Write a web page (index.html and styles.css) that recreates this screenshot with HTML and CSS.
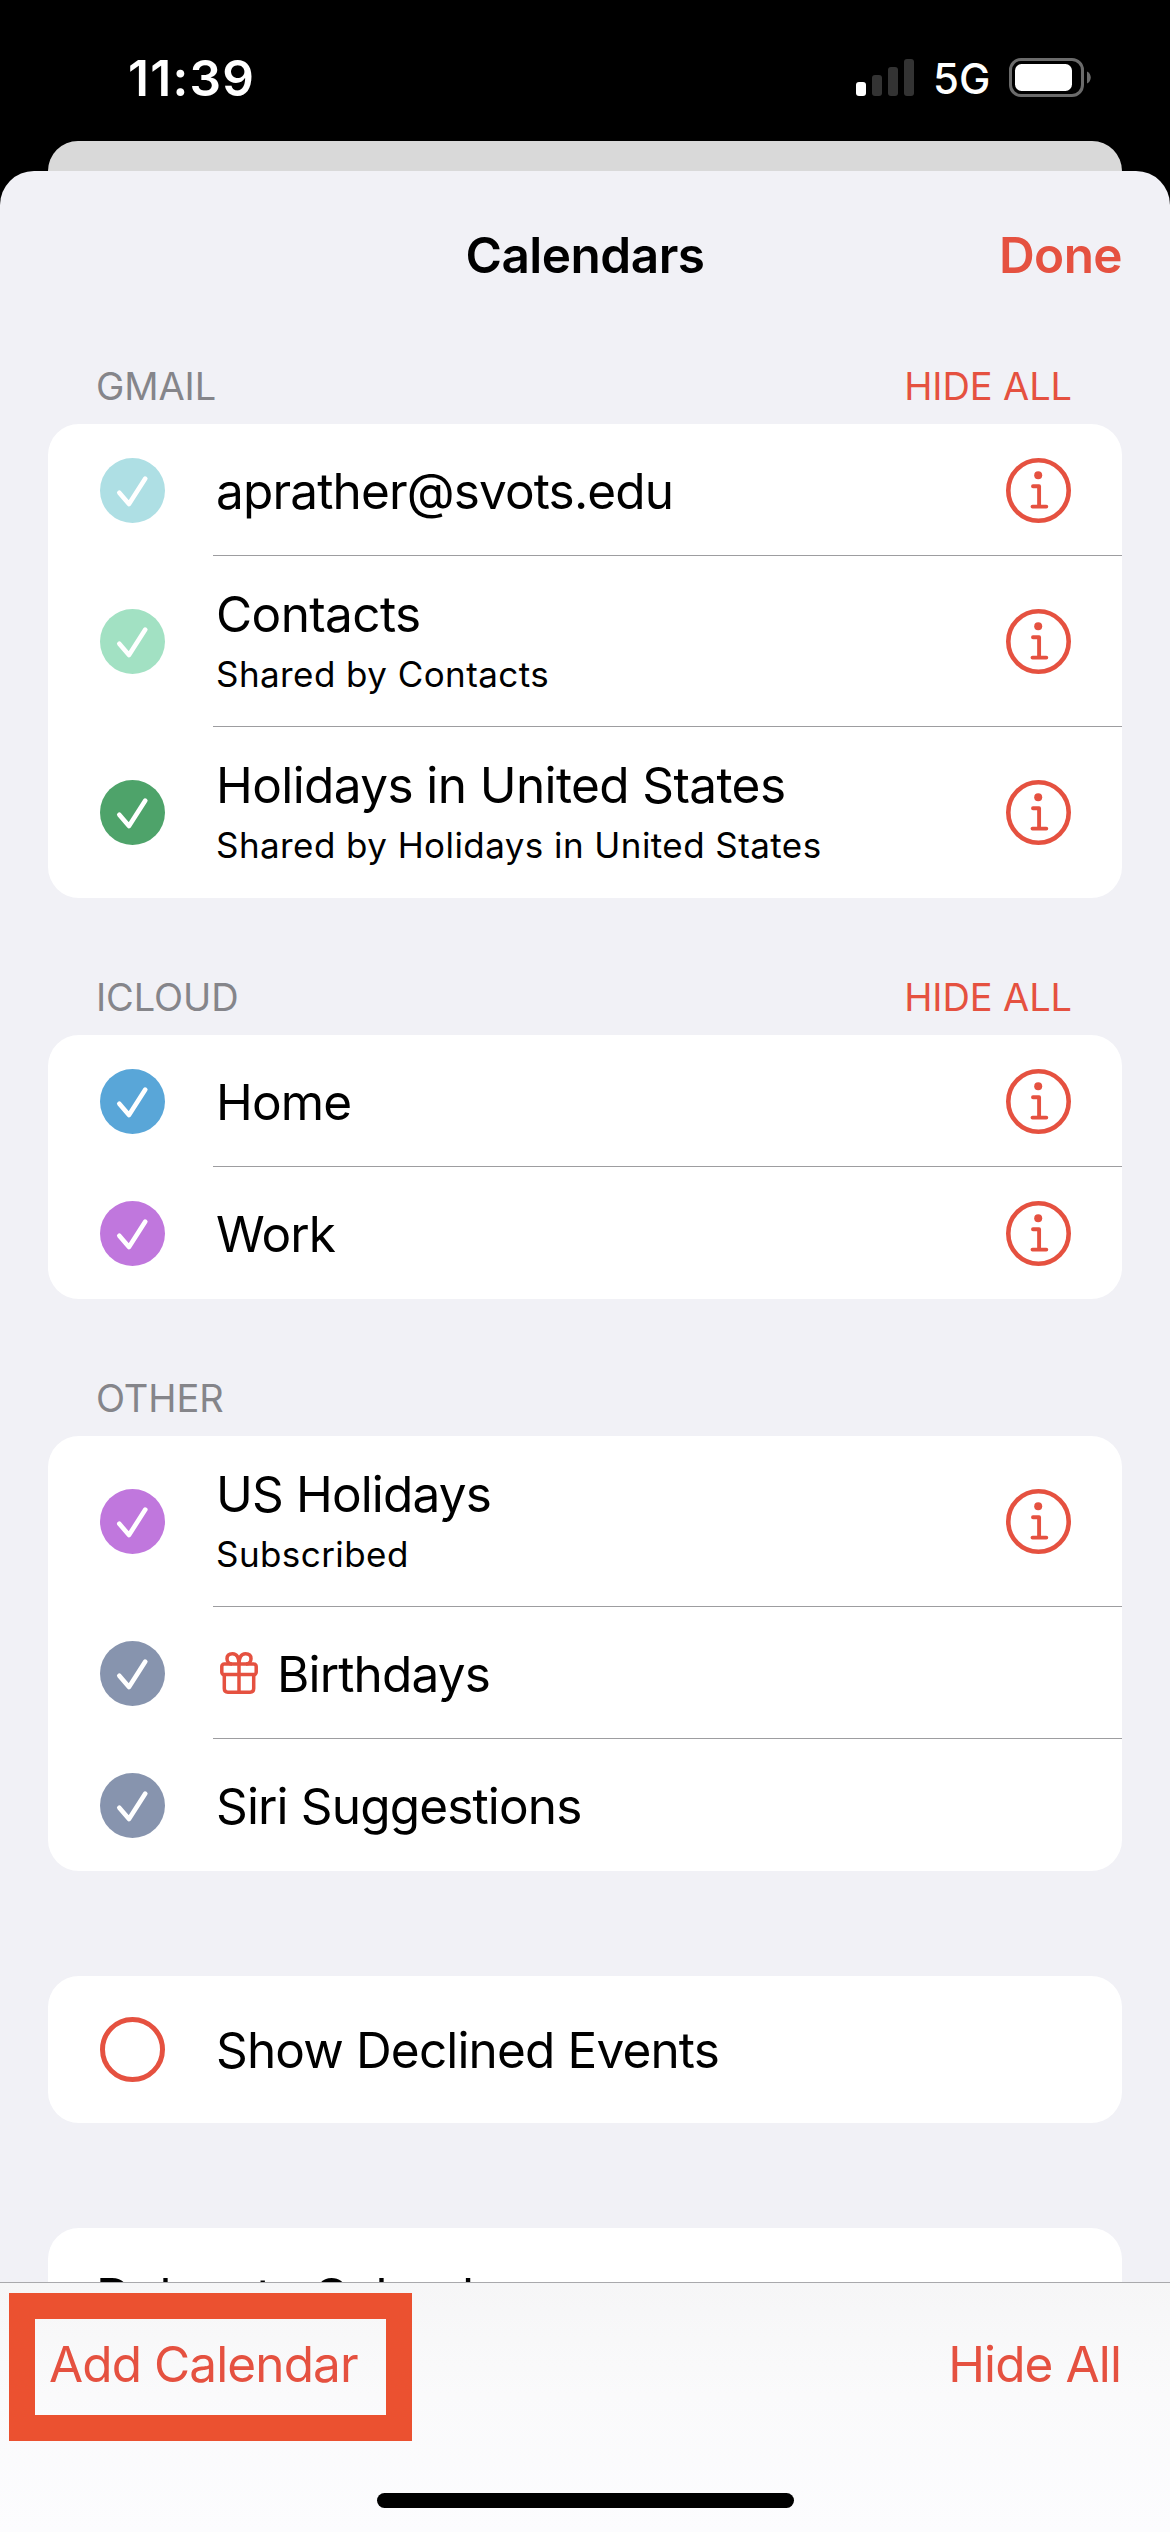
FILE: index.html
```html
<!DOCTYPE html>
<html lang="en">
<head>
<meta charset="utf-8">
<title>Calendars</title>
<link rel="stylesheet" href="styles.css">
</head>
<body>
<svg class="defs" width="0" height="0">
  <symbol id="check" viewBox="0 0 65 65">
    <circle cx="32.5" cy="32.5" r="32.5" fill="currentColor"/>
    <path d="M19.3 34.8 29 46 45.3 20.6" fill="none" stroke="#fff" stroke-width="4.6" stroke-linecap="round" stroke-linejoin="round"/>
  </symbol>
  <symbol id="info" viewBox="0 0 65 65">
    <circle cx="32.5" cy="32.5" r="30.2" fill="none" stroke="currentColor" stroke-width="4.6"/>
    <circle cx="32.2" cy="17.3" r="4" fill="currentColor"/>
    <path d="M27 28.2h6.1v20.4M26.5 48.6h13.8" fill="none" stroke="currentColor" stroke-width="3.9" stroke-linecap="round" stroke-linejoin="round"/>
  </symbol>
</svg>
<div class="screen">
  <header class="status">
    <span class="time">11:39</span>
    <div class="indicators">
      <svg class="signal" width="58" height="37" viewBox="0 0 58 37">
        <rect x="0" y="23" width="10" height="14" rx="3" fill="#fff"/>
        <rect x="16" y="16" width="10" height="21" rx="3" fill="#333"/>
        <rect x="32" y="8" width="10" height="29" rx="3" fill="#333"/>
        <rect x="48" y="0" width="10" height="37" rx="3" fill="#333"/>
      </svg>
      <span class="network">5G</span>
      <svg class="battery" width="82" height="39" viewBox="0 0 82 39">
        <rect x="1.5" y="1.5" width="72" height="36" rx="10.5" fill="none" stroke="#6b6b6b" stroke-width="3"/>
        <rect x="6" y="6" width="57" height="27" rx="6.5" fill="#fff"/>
        <path d="M78 13.5c5 2 5 10 0 12z" fill="#6b6b6b"/>
      </svg>
    </div>
  </header>
  <div class="back-sheet"></div>
  <main class="sheet">
    <nav class="nav">
      <h1 class="title">Calendars</h1>
      <a class="done">Done</a>
    </nav>

    <div class="section-head"><span>GMAIL</span><a>HIDE ALL</a></div>
    <section class="card">
      <div class="row">
        <svg class="badge sky"><use href="#check"/></svg>
        <div class="label"><span class="name">aprather@svots.edu</span></div>
        <svg class="info"><use href="#info"/></svg>
      </div>
      <div class="row tall">
        <svg class="badge mint"><use href="#check"/></svg>
        <div class="label"><span class="name loose">Contacts</span><span class="sub">Shared by Contacts</span></div>
        <svg class="info"><use href="#info"/></svg>
      </div>
      <div class="row tall">
        <svg class="badge green"><use href="#check"/></svg>
        <div class="label"><span class="name loose">Holidays in United States</span><span class="sub">Shared by Holidays in United States</span></div>
        <svg class="info"><use href="#info"/></svg>
      </div>
    </section>

    <div class="section-head"><span>ICLOUD</span><a>HIDE ALL</a></div>
    <section class="card">
      <div class="row">
        <svg class="badge blue"><use href="#check"/></svg>
        <div class="label"><span class="name">Home</span></div>
        <svg class="info"><use href="#info"/></svg>
      </div>
      <div class="row">
        <svg class="badge purple"><use href="#check"/></svg>
        <div class="label"><span class="name">Work</span></div>
        <svg class="info"><use href="#info"/></svg>
      </div>
    </section>

    <div class="section-head"><span>OTHER</span></div>
    <section class="card">
      <div class="row tall">
        <svg class="badge purple"><use href="#check"/></svg>
        <div class="label"><span class="name">US Holidays</span><span class="sub">Subscribed</span></div>
        <svg class="info"><use href="#info"/></svg>
      </div>
      <div class="row">
        <svg class="badge slate"><use href="#check"/></svg>
        <svg class="gift" width="38" height="42" viewBox="0 0 38 42" fill="none" stroke="currentColor" stroke-width="3.5" stroke-linejoin="round">
          <rect x="1.8" y="12" width="34.4" height="10.6" rx="2.4"/>
          <path d="M4.3 22.6v14q0 3.6 3.6 3.6h22.2q3.6 0 3.6-3.6v-14M19 12v28.2"/>
          <path d="M19 12C19 5.5 17 1.8 12.500 1.8C8.800 1.8 7 4 7 6.800C7 9.800 9 12 12 12M19 12C19 5.5 21 1.8 25.500 1.8C29.200 1.8 31 4 31 6.800C31 9.800 29 12 26 12"/>
        </svg>
        <div class="label"><span class="name">Birthdays</span></div>
      </div>
      <div class="row">
        <svg class="badge slate"><use href="#check"/></svg>
        <div class="label"><span class="name">Siri Suggestions</span></div>
      </div>
    </section>

    <section class="card declined">
      <div class="row option">
        <span class="ring"></span>
        <div class="label"><span class="name">Show Declined Events</span></div>
      </div>
    </section>

    <section class="card delegate"><span class="name loose">Delegate Calendars</span></section>
  </main>
  <footer class="toolbar">
    <div class="actions">
      <a>Add Calendar</a>
      <a>Hide All</a>
    </div>
    <div class="home-indicator"></div>
    <div class="highlight"></div>
  </footer>
</div>
</body>
</html>
```
FILE: styles.css
```css
* { box-sizing: border-box; }
body {
  margin: 0;
  background: #000;
  color: #000;
  font-family: Inter, "Liberation Sans", sans-serif;
  font-size: 49.5px;
  line-height: 60px;
  white-space: nowrap;
}
svg { display: block; flex: none; }
.defs { position: absolute; }
.screen {
  width: 1170px;
  height: 2532px;
  display: flex;
  flex-direction: column;
  overflow: hidden;
}

.status {
  flex: none;
  height: 141px;
  padding: 48px 79px 0 128px;
  display: flex;
  justify-content: space-between;
  align-items: flex-start;
  color: #fff;
}
.time { font-weight: 600; letter-spacing: 1.3px; }
.indicators { display: flex; padding-top: 10px; align-items: flex-start; }
.signal { margin-top: 1px; }
.network {
  width: 95px;
  padding-left: 19px;
  font-size: 42px;
  font-weight: 500;
  line-height: 42px;
}

.back-sheet {
  flex: none;
  height: 30px;
  margin: 0 48px;
  border-radius: 30px 30px 0 0;
  background: #d9d9d9;
}
.sheet {
  flex: none;
  height: 2111px;
  border-radius: 34px 34px 0 0;
  background: #f1f1f6;
  overflow: hidden;
}

.nav {
  height: 116px;
  padding: 54px 48px 0;
  display: grid;
  grid-template-columns: 1fr auto 1fr;
}
.title {
  grid-column: 2;
  margin: 0;
  font-size: inherit;
  font-weight: 600;
  letter-spacing: -0.5px;
}
.done { justify-self: end; font-weight: 600; letter-spacing: -0.6px; }
a, .info, .gift { color: #e55140; }

.section-head {
  height: 137px;
  padding: 0 98px 14px 96px;
  display: flex;
  justify-content: space-between;
  align-items: flex-end;
  font-size: 38px;
  line-height: 48px;
  letter-spacing: -0.1px;
  color: #85858a;
}

.card {
  margin: 0 48px;
  border-radius: 31px;
  background: #fff;
  overflow: hidden;
}
.row {
  height: 132px;
  padding: 1px 51px 0 52px;
  display: flex;
  align-items: center;
}
.row.tall { height: 171px; padding-top: 0; }
.row:not(:last-child) {
  background: linear-gradient(#9d9da0, #9d9da0) 165px 100% / 100% 1px no-repeat;
}
.badge, .info { width: 65px; height: 65px; }
.label {
  flex: 1;
  margin-left: 51px;
  display: flex;
  flex-direction: column;
  gap: 8px;
}
.tall .label { padding-bottom: 3px; }
.name { letter-spacing: -0.85px; }
.name.loose { letter-spacing: -0.6px; }
.sub { font-size: 35px; line-height: 44px; letter-spacing: 0.43px; }
.gift { margin-left: 55px; margin-top: -2px; }
.gift + .label { margin-left: 19px; }

.sky { color: #aedfe4; }
.mint { color: #a2e1c3; }
.green { color: #4ea36a; }
.blue { color: #59a6d8; }
.purple { color: #c077dd; }
.slate { color: #8794ae; }

.declined { margin-top: 105px; }
.row.option { height: 147px; padding-top: 0; }
.ring {
  width: 65px;
  height: 65px;
  border: 5px solid #e55140;
  border-radius: 50%;
}
.delegate { margin-top: 105px; height: 136px; padding-left: 48px; line-height: 136px; }

.toolbar {
  position: relative;
  flex: none;
  height: 250px;
  border-top: 1px solid #a9a9ac;
  background: linear-gradient(#f6f6f7, #fafafb 45%, #fcfcfe);
}
.actions {
  height: 210px;
  padding: 51px 49px 0;
  display: flex;
  justify-content: space-between;
  letter-spacing: -0.9px;
}
.home-indicator {
  width: 417px;
  height: 15px;
  margin: 0 auto;
  border-radius: 8px;
  background: #000;
}
.highlight {
  position: absolute;
  left: 9px;
  top: 10px;
  width: 403px;
  height: 148px;
  border: 26px solid #eb5130;
}
```
